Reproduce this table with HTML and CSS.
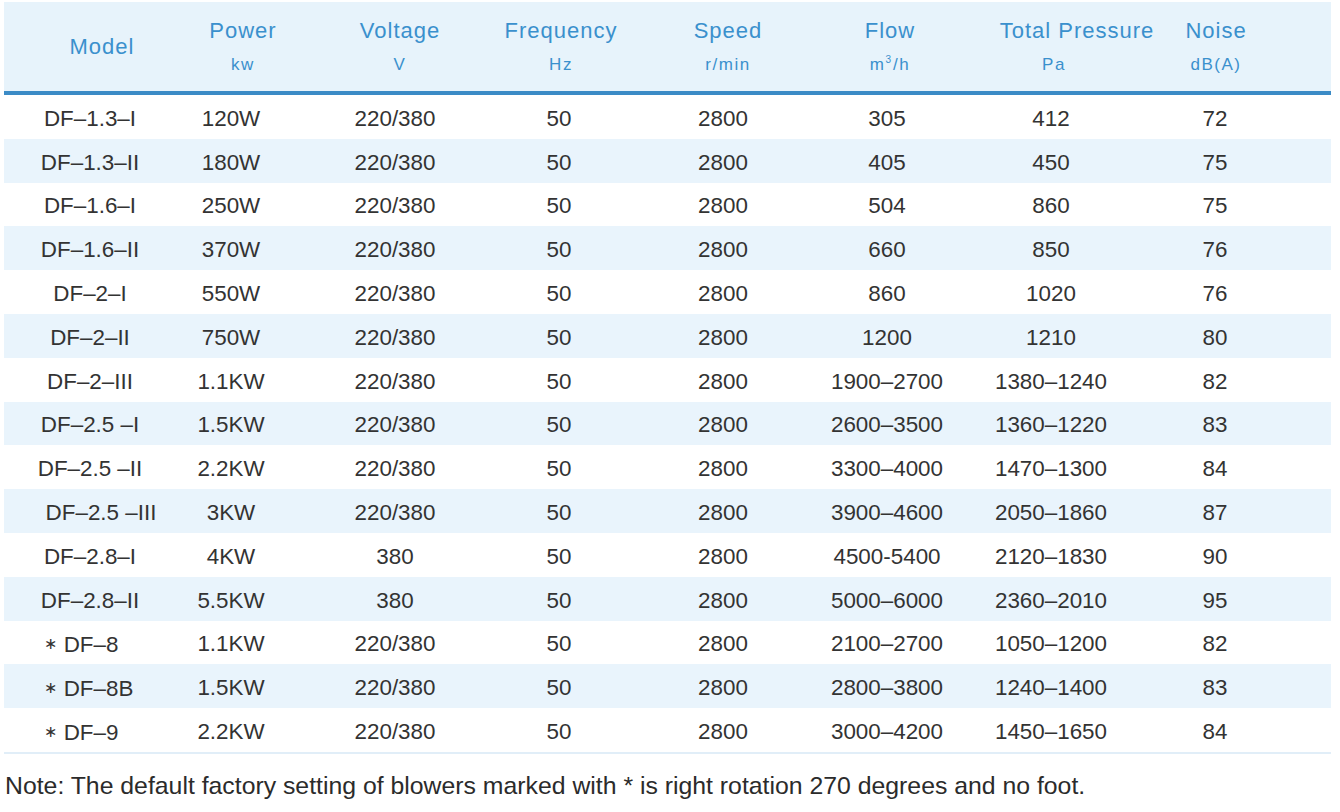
FILE: index.html
```html
<!DOCTYPE html>
<html lang="en">
<head>
<meta charset="utf-8">
<title>Blower specifications</title>
<link rel="stylesheet" href="styles.css">
</head>
<body>
<div class="sheet">
  <div class="table">
    <div class="row head">
      <div class="hc h-model"><span class="main">Model</span></div>
      <div class="hc h-power"><span class="main">Power</span><span class="sub">kw</span></div>
      <div class="hc h-volt"><span class="main">Voltage</span><span class="sub">V</span></div>
      <div class="hc h-freq"><span class="main">Frequency</span><span class="sub">Hz</span></div>
      <div class="hc h-speed"><span class="main">Speed</span><span class="sub">r/min</span></div>
      <div class="hc h-flow"><span class="main">Flow</span><span class="sub">m<sup>3</sup>/h</span></div>
      <div class="hc h-press"><span class="main press-main">Total Pressure</span><span class="sub">Pa</span></div>
      <div class="hc h-noise"><span class="main">Noise</span><span class="sub">dB(A)</span></div>
    </div>
    <div class="row"><div class="c model">DF–1.3–I</div><div class="c power">120W</div><div class="c">220/380</div><div class="c">50</div><div class="c">2800</div><div class="c">305</div><div class="c">412</div><div class="c">72</div></div>
    <div class="row alt"><div class="c model">DF–1.3–II</div><div class="c power">180W</div><div class="c">220/380</div><div class="c">50</div><div class="c">2800</div><div class="c">405</div><div class="c">450</div><div class="c">75</div></div>
    <div class="row"><div class="c model">DF–1.6–I</div><div class="c power">250W</div><div class="c">220/380</div><div class="c">50</div><div class="c">2800</div><div class="c">504</div><div class="c">860</div><div class="c">75</div></div>
    <div class="row alt"><div class="c model">DF–1.6–II</div><div class="c power">370W</div><div class="c">220/380</div><div class="c">50</div><div class="c">2800</div><div class="c">660</div><div class="c">850</div><div class="c">76</div></div>
    <div class="row"><div class="c model">DF–2–I</div><div class="c power">550W</div><div class="c">220/380</div><div class="c">50</div><div class="c">2800</div><div class="c">860</div><div class="c">1020</div><div class="c">76</div></div>
    <div class="row alt"><div class="c model">DF–2–II</div><div class="c power">750W</div><div class="c">220/380</div><div class="c">50</div><div class="c">2800</div><div class="c">1200</div><div class="c">1210</div><div class="c">80</div></div>
    <div class="row"><div class="c model">DF–2–III</div><div class="c power">1.1KW</div><div class="c">220/380</div><div class="c">50</div><div class="c">2800</div><div class="c">1900–2700</div><div class="c">1380–1240</div><div class="c">82</div></div>
    <div class="row alt"><div class="c model">DF–2.5 –I</div><div class="c power">1.5KW</div><div class="c">220/380</div><div class="c">50</div><div class="c">2800</div><div class="c">2600–3500</div><div class="c">1360–1220</div><div class="c">83</div></div>
    <div class="row"><div class="c model">DF–2.5 –II</div><div class="c power">2.2KW</div><div class="c">220/380</div><div class="c">50</div><div class="c">2800</div><div class="c">3300–4000</div><div class="c">1470–1300</div><div class="c">84</div></div>
    <div class="row alt"><div class="c model wide">DF–2.5 –III</div><div class="c power">3KW</div><div class="c">220/380</div><div class="c">50</div><div class="c">2800</div><div class="c">3900–4600</div><div class="c">2050–1860</div><div class="c">87</div></div>
    <div class="row"><div class="c model">DF–2.8–I</div><div class="c power">4KW</div><div class="c">380</div><div class="c">50</div><div class="c">2800</div><div class="c">4500-5400</div><div class="c">2120–1830</div><div class="c">90</div></div>
    <div class="row alt"><div class="c model">DF–2.8–II</div><div class="c power">5.5KW</div><div class="c">380</div><div class="c">50</div><div class="c">2800</div><div class="c">5000–6000</div><div class="c">2360–2010</div><div class="c">95</div></div>
    <div class="row"><div class="c model star"><span class="ast">∗</span> DF–8</div><div class="c power">1.1KW</div><div class="c">220/380</div><div class="c">50</div><div class="c">2800</div><div class="c">2100–2700</div><div class="c">1050–1200</div><div class="c">82</div></div>
    <div class="row alt"><div class="c model star"><span class="ast">∗</span> DF–8B</div><div class="c power">1.5KW</div><div class="c">220/380</div><div class="c">50</div><div class="c">2800</div><div class="c">2800–3800</div><div class="c">1240–1400</div><div class="c">83</div></div>
    <div class="row last"><div class="c model star"><span class="ast">∗</span> DF–9</div><div class="c power">2.2KW</div><div class="c">220/380</div><div class="c">50</div><div class="c">2800</div><div class="c">3000–4200</div><div class="c">1450–1650</div><div class="c">84</div></div>
  </div>
  <p class="note">Note: The default factory setting of blowers marked with * is right rotation 270 degrees and no foot.</p>
</div>
</body>
</html>
```
FILE: styles.css
```css
html, body {
  margin: 0;
  padding: 0;
  background: #ffffff;
}

body {
  font-family: "Liberation Sans", Arial, Helvetica, sans-serif;
  color: #333333;
}

.sheet {
  width: 1340px;
  height: 812px;
  padding: 2px 0 0 4px;
  box-sizing: border-box;
  overflow: hidden;
}

.table {
  width: 1327px;
  border-bottom: 2px solid #e1eef8;
}

.row {
  display: grid;
  grid-template-columns: 156px 153px repeat(6, 164px);
  height: 43.8px;
  align-items: center;
}

.row.alt {
  background: #e9f4fc;
}

.row.head {
  height: 89px;
  background: #e7f3fb;
  border-bottom: 4px solid #3b8bc6;
  align-items: start;
  color: #3a90cd;
}

.hc {
  display: flex;
  flex-direction: column;
  align-items: center;
  padding-top: 16px;
  padding-left: 6px;
  white-space: nowrap;
}

.hc .main {
  font-size: 22px;
  line-height: 26px;
  letter-spacing: 1px;
}

.hc .sub {
  margin-top: 10px;
  font-size: 17px;
  line-height: 22px;
  letter-spacing: 1.5px;
}

.hc sup {
  font-size: 10px;
  line-height: 0;
  vertical-align: 7px;
  letter-spacing: 0;
  margin-right: 2px;
}

.h-model {
  height: 89px;
  box-sizing: border-box;
  padding: 0 0 0 40px;
  justify-content: center;
}

.h-power { padding-left: 13px; }
.h-volt { padding-left: 10px; }
.h-freq { padding-left: 4px; }
.h-speed { padding-left: 10px; }
.h-flow { padding-left: 6px; }
.h-press { padding-left: 6px; }
.h-noise { padding-left: 2px; }

.press-main {
  margin-left: 46px;
}

.c {
  text-align: center;
  font-size: 22.4px;
  line-height: 26px;
  padding-top: 4px;
  white-space: nowrap;
}

.c.model {
  padding-left: 16px;
}

.c.model.wide {
  padding-left: 38px;
}

.c.model.star {
  text-align: left;
  padding-left: 40px;
}

.ast {
  font-family: "DejaVu Sans", sans-serif;
  font-size: 16px;
  vertical-align: 3px;
}

.c.power {
  padding-right: 11px;
}

.note {
  margin: 18px 0 0 1px;
  font-size: 24.8px;
  line-height: 28px;
  color: #2b2b2b;
}
```
